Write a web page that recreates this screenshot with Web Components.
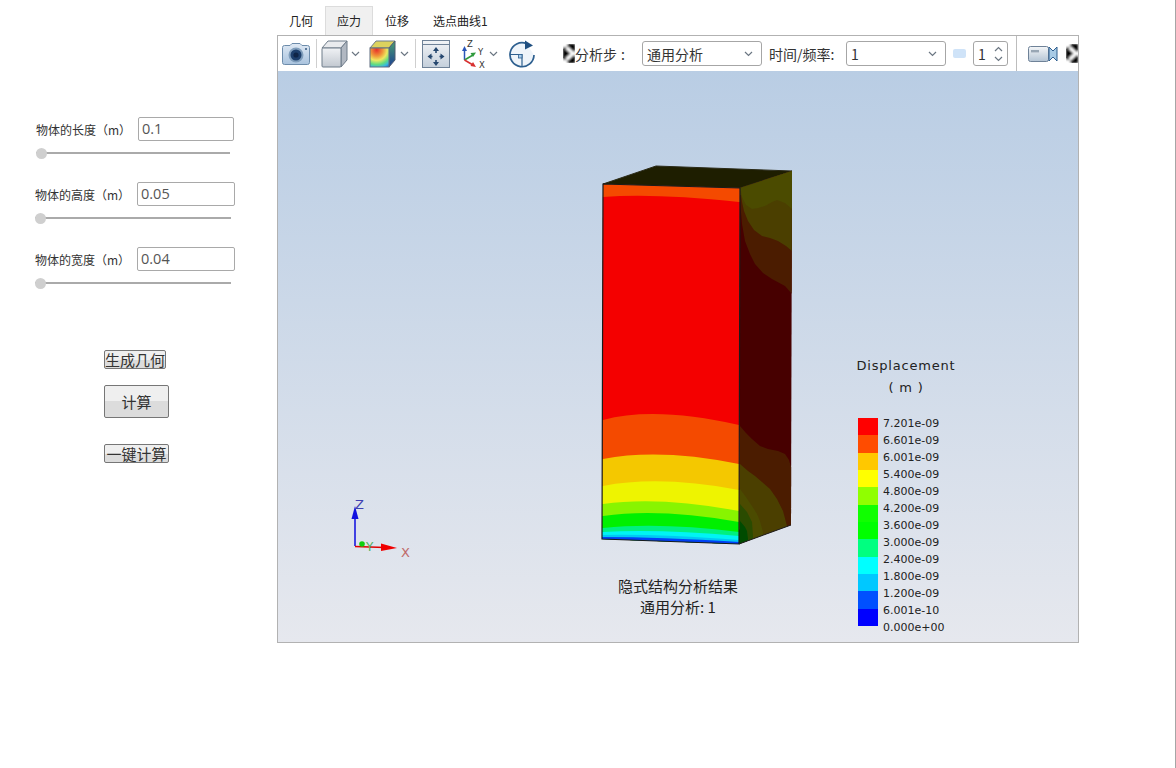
<!DOCTYPE html>
<html lang="zh">
<head>
<meta charset="utf-8">
<title>结构分析</title>
<style>
  html, body { margin: 0; height: 100%; background: #fff; overflow: hidden; }
  body { font-family: "Noto Sans CJK SC", "Noto Sans", sans-serif; color: #222; }
</style>
</head>
<body>
<sim-app>
  <param-panel slot="side">
    <param-row value="0.1" left="36" label-width="102" input-width="96">物体的长度（m）</param-row>
    <param-row value="0.05" left="35" label-width="102" input-width="98">物体的高度（m）</param-row>
    <param-row value="0.04" left="35" label-width="102" input-width="98">物体的宽度（m）</param-row>
    <div slot="actions" style="display:flex;flex-direction:column;align-items:flex-start;">
      <action-button w="62" h="19">生成几何</action-button>
      <action-button w="65" h="33" gap="16">计算</action-button>
      <action-button w="65" h="19" gap="26">一键计算</action-button>
    </div>
  </param-panel>
  <result-viewer slot="main"></result-viewer>
</sim-app>

<script>
const ICONS = {
  camera: `<svg width="28" height="24" viewBox="0 0 28 24">
    <defs><linearGradient id="cb" x1="0" y1="0" x2="0" y2="1"><stop offset="0" stop-color="#dfe9f4"/><stop offset="1" stop-color="#a9c3de"/></linearGradient></defs>
    <path d="M8 3.5 L10 1.5 H18 L20 3.5 H25.5 Q27.5 3.5 27.5 5.5 V20.5 Q27.5 22.5 25.5 22.5 H2.5 Q.5 22.5 .5 20.5 V5.5 Q.5 3.5 2.5 3.5Z" fill="url(#cb)" stroke="#6d8cab"/>
    <circle cx="14" cy="13" r="7.5" fill="#7f9dbb"/><circle cx="14" cy="13" r="5.5" fill="#1d3f6c"/><circle cx="14" cy="13" r="2.6" fill="#0f2547"/>
    <circle cx="24" cy="7" r="1" fill="#34577f"/></svg>`,
  cube: `<svg width="27" height="28" viewBox="0 0 27 28">
    <defs><linearGradient id="cf" x1="0" y1="0" x2="0" y2="1"><stop offset="0" stop-color="#f0f2f5"/><stop offset="1" stop-color="#c2c8d0"/></linearGradient></defs>
    <path d="M1 8 L7 1 H26 L20 8Z" fill="#e9ebee" stroke="#6f7c8a"/>
    <path d="M20 8 L26 1 V20 L20 27Z" fill="#b1b8c2" stroke="#6f7c8a"/>
    <rect x="1" y="8" width="19" height="19" rx="1" fill="url(#cf)" stroke="#6f7c8a"/></svg>`,
  colorcube: `<svg width="27" height="28" viewBox="0 0 27 28">
    <defs>
      <radialGradient id="cc" cx=".35" cy=".1" r="1.1"><stop offset="0" stop-color="#e8302a"/><stop offset=".3" stop-color="#f0983a"/><stop offset=".5" stop-color="#eee860"/><stop offset=".7" stop-color="#62dc80"/><stop offset=".85" stop-color="#38b8e0"/><stop offset="1" stop-color="#2060d8"/></radialGradient>
      <linearGradient id="cs" x1="0" y1="0" x2="0" y2="1"><stop offset="0" stop-color="#4aa070"/><stop offset="1" stop-color="#1c3f94"/></linearGradient>
    </defs>
    <path d="M1 8 L7 1 H26 L20 8Z" fill="#dcd25e" stroke="#6f7c8a"/>
    <path d="M20 8 L26 1 V20 L20 27Z" fill="url(#cs)" stroke="#4f5c70"/>
    <rect x="1" y="8" width="19" height="19" fill="url(#cc)" stroke="#5f6c80"/></svg>`,
  fit: `<svg width="28" height="28" viewBox="0 0 28 28">
    <defs><linearGradient id="fg" x1="0" y1="0" x2="0" y2="1"><stop offset="0" stop-color="#f2f4f7"/><stop offset="1" stop-color="#c4cfdb"/></linearGradient></defs>
    <rect x=".5" y=".5" width="27" height="27" fill="url(#fg)" stroke="#6f8298"/>
    <path d="M.5 4.5 H27.5" stroke="#6f8298"/>
    <path d="M14 13 V10 M14 23 V20 M10.5 16.5 H8 M20 16.5 H17.5" stroke="#25476f" stroke-width="1.6"/>
    <path d="M14 7 L11 11 H17Z M14 26 L11 22 H17Z M5.5 16.5 L9.5 13.5 V19.5Z M22.5 16.5 L18.5 13.5 V19.5Z" fill="#25476f"/></svg>`,
  triad: `<svg width="28" height="30" viewBox="0 0 28 30">
    <path d="M3.5 21 V11" stroke="#2b55b8" stroke-width="1.5"/><path d="M3.5 7 L1 12 H6Z" fill="#2b55b8"/>
    <path d="M3.5 21 L12 16" stroke="#2f9a3c" stroke-width="1.5"/><path d="M15 13.5 L9.5 14 L12 18Z" fill="#2f9a3c"/>
    <path d="M3.5 21 L12 26" stroke="#d83030" stroke-width="1.5"/><path d="M15 28 L9.5 27 L12 23Z" fill="#d83030"/>
    <text x="6" y="8" font-size="8.5" font-family="DejaVu Sans" fill="#333">Z</text>
    <text x="17" y="16" font-size="8.5" font-family="DejaVu Sans" fill="#333">Y</text>
    <text x="18" y="28.5" font-size="8.5" font-family="DejaVu Sans" fill="#333">X</text></svg>`,
  rotate: `<svg width="28" height="28" viewBox="0 0 28 28">
    <path d="M18.5 3.6 A12 12 0 1 0 26 15" fill="#eef4fa" stroke="#2d5f8f" stroke-width="1.7"/>
    <path d="M17 .5 L25 5.5 L17 9.5Z" fill="#1f4f80"/>
    <path d="M2 14.5 H14 V26" fill="none" stroke="#2d5f8f" stroke-width="1.2"/>
    <rect x="10.5" y="14.5" width="3.5" height="3.5" fill="#a8cdec" stroke="#2d5f8f" stroke-width=".8"/></svg>`,
  broken: `<svg width="12" height="19" viewBox="0 0 12 19">
    <defs><filter id="bl" x="-20%" y="-20%" width="140%" height="140%"><feGaussianBlur stdDeviation=".9"/></filter></defs>
    <rect width="12" height="19" fill="#fff"/>
    <g filter="url(#bl)"><rect x="0" y="0" width="12" height="19" fill="#000"/>
    <path d="M-2 -2 H4 V3 H-2Z M-2 16 H4 V21 H-2Z M10 8 H14 V11 H10Z" fill="#fff"/>
    <path d="M3.5 3.5 L10 9.5 L3.5 15.5" fill="none" stroke="#fff" stroke-width="3.4"/></g></svg>`,
  video: `<svg width="30" height="18" viewBox="0 0 30 18">
    <defs><linearGradient id="vg" x1="0" y1="0" x2="0" y2="1"><stop offset="0" stop-color="#f4f6f8"/><stop offset="1" stop-color="#b4c4d4"/></linearGradient></defs>
    <rect x=".5" y="1.5" width="20" height="15" rx="2" fill="url(#vg)" stroke="#6f8298"/>
    <rect x="3" y="5" width="8" height="2.4" fill="#98a6b4"/>
    <path d="M21 2 L25 6 L29 2 V16 L25 12 L21 16Z" fill="#a8cbe6" stroke="#2f5f8f"/></svg>`,
  chevron: `<svg width="9" height="6" viewBox="0 0 9 6"><path d="M1 1 L4.5 4.5 L8 1" fill="none" stroke="#6b7682" stroke-width="1.2"/></svg>`
};

class SimApp extends HTMLElement {
  connectedCallback() {
    this.attachShadow({ mode: "open" }).innerHTML = `
      <style>
        :host { display: flex; width: 1175px; height: 768px; border-right: 1px solid #a6a6a6; }
        .side { flex: none; width: 277px; }
        .main { flex: none; width: 802px; }
      </style>
      <div class="side"><slot name="side"></slot></div>
      <div class="main"><slot name="main"></slot></div>`;
  }
}

class ParamPanel extends HTMLElement {
  connectedCallback() {
    this.attachShadow({ mode: "open" }).innerHTML = `
      <style>
        :host { display: block; padding-top: 117px; }
        .rows { display: flex; flex-direction: column; gap: 22px; }
        .actions { margin: 60px 0 0 104px; }
      </style>
      <div class="rows"><slot></slot></div>
      <div class="actions"><slot name="actions"></slot></div>`;
  }
}

class ParamRow extends HTMLElement {
  connectedCallback() {
    const left = this.getAttribute("left");
    const labelW = this.getAttribute("label-width");
    const inputW = this.getAttribute("input-width");
    const value = this.getAttribute("value");
    this.attachShadow({ mode: "open" }).innerHTML = `
      <style>
        :host { display: block; padding-left: ${left}px; height: 43px; }
        .top { display: flex; align-items: center; height: 24px; }
        .label { flex: none; width: ${labelW}px; font-size: 12px; color: #333; white-space: nowrap; }
        .input {
          flex: none; box-sizing: border-box; width: ${inputW}px; height: 24px; padding: 0 3px;
          border: 1px solid #a9a9a9; border-radius: 2px; background: #fff;
          font: 400 14.5px/22px "Open Sans", sans-serif; color: #555;
        }
        .slider { position: relative; width: ${+labelW + +inputW - 4}px; height: 2px; margin-top: 11px; background: #aaa; }
        .thumb { position: absolute; left: 0; top: -4.5px; width: 11px; height: 11px; border-radius: 50%; background: #cfcfcf; }
      </style>
      <div class="top"><span class="label"><slot></slot></span><div class="input">${value}</div></div>
      <div class="slider"><div class="thumb"></div></div>`;
  }
}

class ActionButton extends HTMLElement {
  connectedCallback() {
    const w = this.getAttribute("w"), h = +this.getAttribute("h"), gap = this.getAttribute("gap") || 0;
    this.attachShadow({ mode: "open" }).innerHTML = `
      <style>
        :host {
          display: flex; align-items: center; justify-content: center; box-sizing: border-box;
          width: ${w}px; height: ${h}px; margin-top: ${gap}px; padding-bottom: ${h < 25 ? 1 : 0}px;
          border: 1px solid #767676; border-radius: 2px;
          background: linear-gradient(#efefef 0 50%, #dcdcdc 50% 100%);
          font-size: 15px; line-height: 1; color: #333; white-space: nowrap;
        }
      </style><slot></slot>`;
  }
}

class ViewerTabs extends HTMLElement {
  connectedCallback() {
    const names = ["几何", "应力", "位移", "选点曲线1"];
    const active = +this.getAttribute("active");
    this.attachShadow({ mode: "open" }).innerHTML = `
      <style>
        :host { display: flex; height: 29px; margin-top: 6px; }
        .tab { box-sizing: border-box; height: 29px; padding: 0 11px; font-size: 12px; line-height: 28px; color: #222; border: 1px solid transparent; border-bottom: 0; }
        .tab.on { background: #f0f0f0; border-color: #dcdcdc; }
      </style>
      ${names.map((n, i) => `<div class="tab ${i === active ? "on" : ""}">${n}</div>`).join("")}`;
  }
}

class ComboBox extends HTMLElement {
  connectedCallback() {
    this.attachShadow({ mode: "open" }).innerHTML = `
      <style>
        :host {
          display: flex; flex: none; align-items: center; justify-content: space-between; box-sizing: border-box;
          height: 25px; padding: 0 8px 0 4px; border: 1px solid #a6a6a6; border-radius: 3px; background: #fff;
          font-size: 14px; color: #333;
        }
      </style><slot></slot>${ICONS.chevron}`;
  }
}

class ViewToolbar extends HTMLElement {
  connectedCallback() {
    const item = (name, ml) => `<span class="i" style="margin-left:${ml}px">${ICONS[name]}</span>`;
    const sep = (ml, full) => `<span class="sep ${full ? "full" : ""}" style="margin-left:${ml}px"></span>`;
    this.attachShadow({ mode: "open" }).innerHTML = `
      <style>
        :host { display: flex; align-items: center; height: 35px; background: #fff; overflow: hidden; font-size: 14px; color: #333; white-space: nowrap; }
        .i { display: flex; flex: none; align-items: center; }
        .sep { flex: none; width: 1px; height: 29px; background: #cfcfcf; }
        .sep.full { height: 35px; background: #bdbdbd; }
        .lab { flex: none; }
        .spin {
          display: flex; flex: none; align-items: center; justify-content: space-between; box-sizing: border-box;
          width: 35px; height: 25px; margin-left: 7px; padding: 0 4px; border: 1px solid #a6a6a6; border-radius: 3px;
        }
        .arrows { display: flex; flex-direction: column; gap: 4px; }
        .up { transform: scaleY(-1); display: flex; }
        .dn { display: flex; }
        .pill { flex: none; width: 13px; height: 9px; margin-left: 7px; border-radius: 2px; background: #cfe3f8; }
      </style>
      ${item("camera", 4)}${sep(6)}${item("cube", 4)}${item("chevron", 3)}
      ${item("colorcube", 9)}${item("chevron", 4)}${sep(6)}
      ${item("fit", 6)}${item("triad", 11)}${item("chevron", 0)}${item("rotate", 10)}
      ${item("broken", 27)}
      <span class="lab" style="width:52px">分析步<span style="margin-left:4px">:</span></span>
      <combo-box style="width:120px;margin-left:15px">通用分析</combo-box>
      <span class="lab" style="width:70px;margin-left:7px">时间/频率:</span>
      <combo-box style="width:100px;margin-left:7px">1</combo-box>
      <span class="pill"></span>
      <span class="spin">1<span class="arrows"><span class="up">${ICONS.chevron}</span><span class="dn">${ICONS.chevron}</span></span></span>
      ${sep(8, true)}${item("video", 11)}${item("broken", 8)}`;
  }
}

class ModelView extends HTMLElement {
  connectedCallback() {
    const band = (fill, y0, cx, cy, y1) =>
      `<path d="M600 ${y0} L603 ${y0} Q${cx} ${cy} 739 ${y1} L745 ${y1} V552 H600Z" fill="${fill}"/>`;
    const up = (fill, pts) => `<path d="M738 150 H800 V${pts[pts.length - 1].split(",")[1]} L${pts.slice().reverse().join(" L")} L738 ${pts[0].split(",")[1]}Z" fill="${fill}"/>`;
    const down = (fill, pts) => `<path d="M738 ${pts[0].split(",")[1]} L${pts.join(" L")} L800 ${pts[pts.length - 1].split(",")[1]} V560 H738Z" fill="${fill}"/>`;
    this.attachShadow({ mode: "open" }).innerHTML = `
      <style>
        :host { position: absolute; inset: 0; display: block; }
        svg { display: block; }
      </style>
      <svg width="800" height="571" viewBox="278 72 800 571">
        <defs>
          <clipPath id="front"><path d="M603 185 L740 189 L739 545 L602 540Z"/></clipPath>
          <clipPath id="right"><path d="M740 189 L792 172 L791 526 L739 545Z"/></clipPath>
        </defs>
        <path d="M603 185 L656 167 L792 172 L740 189Z" fill="#1e1e00" stroke="#2a2a18" stroke-width="1"/>
        <g clip-path="url(#right)">
          <rect x="735" y="165" width="60" height="385" fill="#470000"/>
          ${up("#4b1c00", ["740,202", "742,225", "745,242", "750,255", "755,265", "763,274", "772,280", "785,287", "792,295"])}
          ${up("#4b3f00", ["741,196", "742,203", "744,212", "748,222", "754,231", "762,237", "770,239", "778,242", "786,247", "792,252"])}
          ${up("#4b4b00", ["741,192", "742,198", "746,206", "752,210", "758,209", "765,207", "772,203", "777,201", "785,204", "792,210"])}
          ${down("#4b1c00", ["740,427", "746,434", "752,440", "760,447", "768,450", "778,452", "785,455", "789,461", "791,468"])}
          ${down("#4b3f00", ["740,465", "748,472", "755,477", "762,483", "770,490", "777,500", "783,512", "787,527"])}
          ${down("#4b4b00", ["740,490", "746,498", "752,507", "757,515", "760,522", "763,533", "764,550"])}
          ${down("#2a4b00", ["740,505", "747,513", "752,523", "753,537", "753,550"])}
          ${down("#004b00", ["740,522", "745,528", "747,532", "748,540", "748,550"])}
        </g>
        <g clip-path="url(#front)">
          <rect x="600" y="180" width="145" height="370" fill="#f44a00"/>
          ${band("#f40000", 198, 655, 194, 203)}
          ${band("#f44a00", 421, 655, 407, 426)}
          ${band("#f4c800", 460, 660, 449, 465)}
          ${band("#eef400", 487, 660, 476, 491)}
          ${band("#88f400", 505, 660, 497, 512)}
          ${band("#00f000", 517, 660, 509, 523)}
          ${band("#00f080", 529, 660, 523, 533)}
          ${band("#00f4f4", 533, 660, 530, 537)}
          ${band("#00c8f4", 536, 660, 535, 541)}
          ${band("#0040f4", 538, 660, 538, 543)}
        </g>
        <path d="M603 185 L740 189 L739 545 L602 540Z" fill="none" stroke="#1a1a1a" stroke-width="1.2"/>
        <path d="M739 545 L791 526" fill="none" stroke="#222" stroke-width="1"/>
        <g>
          <path d="M355 547 V518" stroke="#1a1ae0" stroke-width="1.6"/>
          <path d="M355 507 L351.5 520 H358.5Z" fill="#1010e0"/>
          <path d="M355 547.5 L385 548.5" stroke="#e00000" stroke-width="1.5"/>
          <path d="M397 549 L381 544.5 V552Z" fill="#f00000"/>
          <circle cx="362" cy="545" r="2.8" fill="#10d010"/>
          <text x="355" y="510" font-size="13" font-family="DejaVu Sans" fill="#4040b0">Z</text>
          <text x="366" y="552" font-size="12" font-family="DejaVu Sans" fill="#50b060">Y</text>
          <text x="401" y="558" font-size="13" font-family="DejaVu Sans" fill="#c06a6a">X</text>
        </g>
      </svg>`;
  }
}

class ResultLegend extends HTMLElement {
  connectedCallback() {
    const colors = ["#ff0000", "#ff4c00", "#ffc800", "#ffff00", "#90ff00", "#10ff00", "#00ff00", "#00ff80", "#00ffff", "#00c8ff", "#0050ff", "#0000ff"];
    const labels = ["7.201e-09", "6.601e-09", "6.001e-09", "5.400e-09", "4.800e-09", "4.200e-09", "3.600e-09", "3.000e-09", "2.400e-09", "1.800e-09", "1.200e-09", "6.001e-10", "0.000e+00"];
    this.attachShadow({ mode: "open" }).innerHTML = `
      <style>
        :host { position: absolute; left: 566px; top: 284px; width: 130px; display: block; font-family: "DejaVu Sans", sans-serif; color: #222; }
        .title { width: 124px; text-align: center; font-size: 13px; line-height: 22px; letter-spacing: .8px; white-space: nowrap; }
        .body { display: flex; margin: 19px 0 0 14px; }
        .bar { width: 20px; }
        .bar div { height: 17.33px; }
        .labels { margin: -3px 0 0 5px; font-size: 11px; line-height: 17px; white-space: nowrap; }
      </style>
      <div class="title">Displacement<br>( m )</div>
      <div class="body">
        <div class="bar">${colors.map(c => `<div style="background:${c}"></div>`).join("")}</div>
        <div class="labels">${labels.map(l => `<div>${l}</div>`).join("")}</div>
      </div>`;
  }
}

class ResultCaption extends HTMLElement {
  connectedCallback() {
    this.attachShadow({ mode: "open" }).innerHTML = `
      <style>
        :host { position: absolute; left: 300px; top: 504px; width: 200px; display: block; text-align: center; font-size: 15px; line-height: 21px; color: #222; }
      </style><slot></slot>`;
  }
}

class ResultViewer extends HTMLElement {
  connectedCallback() {
    this.attachShadow({ mode: "open" }).innerHTML = `
      <style>
        :host { display: block; }
        .frame { box-sizing: border-box; width: 802px; height: 608px; border: 1px solid #b2b2b2; display: flex; flex-direction: column; }
        .scene { position: relative; flex: 1; background: linear-gradient(#b9cde4, #e6e8ee); overflow: hidden; }
      </style>
      <viewer-tabs active="1"></viewer-tabs>
      <div class="frame">
        <view-toolbar></view-toolbar>
        <div class="scene">
          <model-view></model-view>
          <result-legend></result-legend>
          <result-caption>隐式结构分析结果<br>通用分析: 1</result-caption>
        </div>
      </div>`;
  }
}

customElements.define("sim-app", SimApp);
customElements.define("param-panel", ParamPanel);
customElements.define("param-row", ParamRow);
customElements.define("action-button", ActionButton);
customElements.define("viewer-tabs", ViewerTabs);
customElements.define("combo-box", ComboBox);
customElements.define("view-toolbar", ViewToolbar);
customElements.define("model-view", ModelView);
customElements.define("result-legend", ResultLegend);
customElements.define("result-caption", ResultCaption);
customElements.define("result-viewer", ResultViewer);
</script>
</body>
</html>
